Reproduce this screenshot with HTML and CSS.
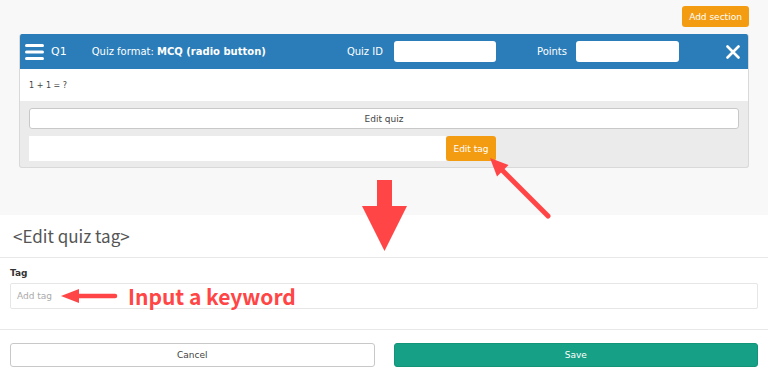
FILE: index.html
```html
<!DOCTYPE html>
<html lang="en">

<head>
  <meta charset="UTF-8">
  <meta name="viewport" content="width=device-width, initial-scale=1.0">
  <title>Edit quiz tag</title>
  <link rel="stylesheet" href="styles.css">
</head>

<body>
  <section class="editor">
    <div class="toolbar">
      <button class="btn-orange add-section">Add section</button>
    </div>
    <div class="quiz-card">
      <div class="quiz-head">
        <svg class="menu-icon" width="19" height="16" viewBox="0 0 19 16">
          <rect x="0" y="0" width="19" height="3" rx="1.5" fill="#fff" />
          <rect x="0" y="6.5" width="19" height="3" rx="1.5" fill="#fff" />
          <rect x="0" y="13" width="19" height="3" rx="1.5" fill="#fff" />
        </svg>
        <span class="quiz-no">Q1</span>
        <span class="quiz-format">Quiz format: <b>MCQ (radio button)</b></span>
        <span class="spacer"></span>
        <span class="head-label">Quiz ID</span>
        <input type="text" class="head-input id-input">
        <span class="head-label points">Points</span>
        <input type="text" class="head-input points-input">
        <svg class="close-icon" width="14" height="14" viewBox="0 0 14 14">
          <path d="M1.5 1.5 L12.5 12.5 M12.5 1.5 L1.5 12.5" stroke="#fff" stroke-width="2.6" stroke-linecap="round" />
        </svg>
      </div>
      <div class="quiz-body">1 + 1 = ?</div>
      <div class="quiz-tools">
        <button class="edit-quiz">Edit quiz</button>
        <div class="tag-row">
          <div class="tag-list"></div>
          <button class="btn-orange edit-tag">Edit tag</button>
        </div>
      </div>
    </div>
  </section>

  <section class="tag-editor">
    <h2 class="tag-title">&lt;Edit quiz tag&gt;</h2>
    <div class="tag-form">
      <label for="tag" class="tag-label">Tag</label>
      <div class="input-wrap">
        <input type="text" id="tag" class="tag-input" placeholder="Add tag">
        <span class="note">Input a keyword</span>
      </div>
    </div>
    <div class="actions">
      <button class="btn-cancel">Cancel</button>
      <button class="btn-save">Save</button>
    </div>
  </section>

  <svg class="overlay" width="768" height="381" viewBox="0 0 768 381">
    <!-- big down arrow -->
    <polygon points="377,180 392,180 392,206 407,206 384.5,251 362,206 377,206" fill="#ff4545" />
    <!-- arrow to the edit tag button -->
    <line x1="500" y1="168" x2="548" y2="216" stroke="#ff4545" stroke-width="5" stroke-linecap="round" />
    <polygon points="490,158 508.5,165 497,176.5" fill="#ff4545" />
    <!-- arrow to the tag input -->
    <line x1="76" y1="296" x2="115" y2="296" stroke="#ff4545" stroke-width="4.5" stroke-linecap="round" />
    <polygon points="61,296 79,289 79,303" fill="#ff4545" />
  </svg>
</body>

</html>
```

FILE: styles.css
```css
* {
  padding: 0;
  margin: 0;
  box-sizing: border-box;
}

body {
  position: relative;
  width: 768px;
  height: 381px;
  overflow: hidden;
  font-family: "DejaVu Sans", Verdana, sans-serif;
  background-color: #fff;
  color: #333;
}

button,
input {
  font-family: inherit;
}

.editor {
  background-color: #f8f8f8;
  padding: 6px 19px 47px;
  height: 215px;
}

.toolbar {
  display: flex;
  justify-content: flex-end;
}

.btn-orange {
  background-color: #f39c12;
  color: #fff;
  border: none;
  border-radius: 3px;
  font-size: 9px;
}

.add-section {
  width: 67px;
  height: 21px;
}

.quiz-card {
  margin-top: 7px;
  border: 1px solid #d9d9d9;
  border-top: none;
  border-radius: 3px;
  background-color: #ebebeb;
  overflow: hidden;
}

.quiz-head {
  display: flex;
  align-items: center;
  height: 35px;
  background-color: #2a7db8;
  color: #fff;
  font-size: 10px;
  padding-left: 5px;
}

.quiz-no {
  margin-left: 7px;
  font-size: 11px;
}

.quiz-format {
  margin-left: 25px;
}

.spacer {
  flex: 1;
}

.head-input {
  height: 21px;
  border: none;
  border-radius: 3px;
  background-color: #fff;
  margin-left: 11px;
}

.id-input {
  width: 102px;
}

.points {
  margin-left: 41px;
}

.points-input {
  width: 103px;
  margin-left: 9px;
}

.close-icon {
  margin-left: 47px;
  margin-right: 8px;
}

.quiz-body {
  height: 32px;
  background-color: #fff;
  font-size: 8px;
  padding: 12px 9px 0;
  color: #444;
}

.quiz-tools {
  display: flex;
  flex-direction: column;
  gap: 7px;
  padding: 7px 9px 6px;
}

.edit-quiz {
  height: 21px;
  border: 1px solid #c8c8c8;
  border-radius: 3px;
  background-color: #fff;
  color: #444;
  font-size: 9px;
}

.tag-row {
  display: flex;
  height: 25px;
}

.tag-list {
  width: 417px;
  background-color: #fff;
}

.edit-tag {
  width: 50px;
  height: 25px;
}

.tag-title {
  height: 43px;
  border-bottom: 1px solid #e8e8e8;
  padding: 8px 0 0 13px;
  font-family: "Noto Sans CJK JP", "Noto Sans", sans-serif;
  font-weight: normal;
  font-size: 17px;
  color: #555;
}

.tag-form {
  padding: 10px 10px 20px;
}

.tag-label {
  display: block;
  height: 15px;
  font-size: 9px;
  font-weight: bold;
  color: #333;
}

.input-wrap {
  position: relative;
}

.tag-input {
  width: 100%;
  height: 26px;
  border: 1px solid #e6e6e6;
  border-radius: 2px;
  padding-left: 6px;
  font-size: 9px;
  outline: none;
}

.tag-input::placeholder {
  color: #aaa;
}

.note {
  position: absolute;
  left: 118px;
  top: -2px;
  font-family: "Noto Sans CJK JP", "Noto Sans", sans-serif;
  font-weight: bold;
  font-size: 21px;
  color: #ff4545;
}

.actions {
  display: flex;
  gap: 19px;
  border-top: 1px solid #e8e8e8;
  padding: 13px 10px 14px;
}

.actions button {
  flex: 1;
  height: 24px;
  border-radius: 3px;
  font-size: 9px;
}

.btn-cancel {
  background-color: #fff;
  border: 1px solid #c8c8c8;
  color: #444;
}

.btn-save {
  background-color: #16a085;
  border: 1px solid #139479;
  color: #fff;
}

.overlay {
  position: absolute;
  left: 0;
  top: 0;
  pointer-events: none;
}
```
